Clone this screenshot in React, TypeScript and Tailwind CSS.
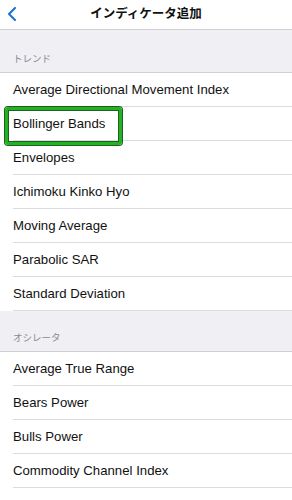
const trend = [
  "Average Directional Movement Index",
  "Bollinger Bands",
  "Envelopes",
  "Ichimoku Kinko Hyo",
  "Moving Average",
  "Parabolic SAR",
  "Standard Deviation",
];

const oscillators = [
  "Average True Range",
  "Bears Power",
  "Bulls Power",
  "Commodity Channel Index",
];

const font = {
  fontFamily: '"Liberation Sans", "Noto Sans CJK JP", sans-serif',
};

function Row({ label, highlight }: { label: string; highlight?: boolean }) {
  return (
    <div className="relative pl-[13px]">
      <div className="flex h-[34px] items-center border-b border-[#dcdce0] pt-[1px] text-[13.2px] text-[#111]">
        {label}
      </div>
      {highlight && (
        <div className="absolute left-[5px] top-[0px] h-[38px] w-[117px] rounded-[3px] border-[3px] border-[#22b322] shadow-[0_0_0_1px_#1f5f1f,inset_0_0_0_1px_#1f5f1f]" />
      )}
    </div>
  );
}

function Section({ title, h }: { title: string; h: string }) {
  return (
    <div
      className={`flex ${h} items-end border-b border-[#cfcfd4] bg-[#efeff4] pb-[6px] pl-[13px] text-[9.5px] text-[#8a8a8e]`}
    >
      {title}
    </div>
  );
}

export default function App() {
  return (
    <div className="h-[500px] w-[292px] overflow-hidden bg-white" style={font}>
      <div className="relative flex h-[30px] items-center justify-center border-b border-[#cfcfd4]">
        <svg
          className="absolute left-[7px] top-[7px]"
          width="10"
          height="14"
          viewBox="0 0 10 14"
          fill="none"
        >
          <path
            d="M8 1 L2 7 L8 13"
            stroke="#1b6fd6"
            strokeWidth="2"
            strokeLinecap="round"
            strokeLinejoin="round"
          />
        </svg>
        <span className="text-[12.5px] font-bold text-[#111]">インディケータ追加</span>
      </div>

      <Section title="トレンド" h="h-[43px]" />
      {trend.map((t) => (
        <Row key={t} label={t} highlight={t === "Bollinger Bands"} />
      ))}

      <Section title="オシレータ" h="h-[41px]" />
      {oscillators.map((t) => (
        <Row key={t} label={t} />
      ))}
    </div>
  );
}
